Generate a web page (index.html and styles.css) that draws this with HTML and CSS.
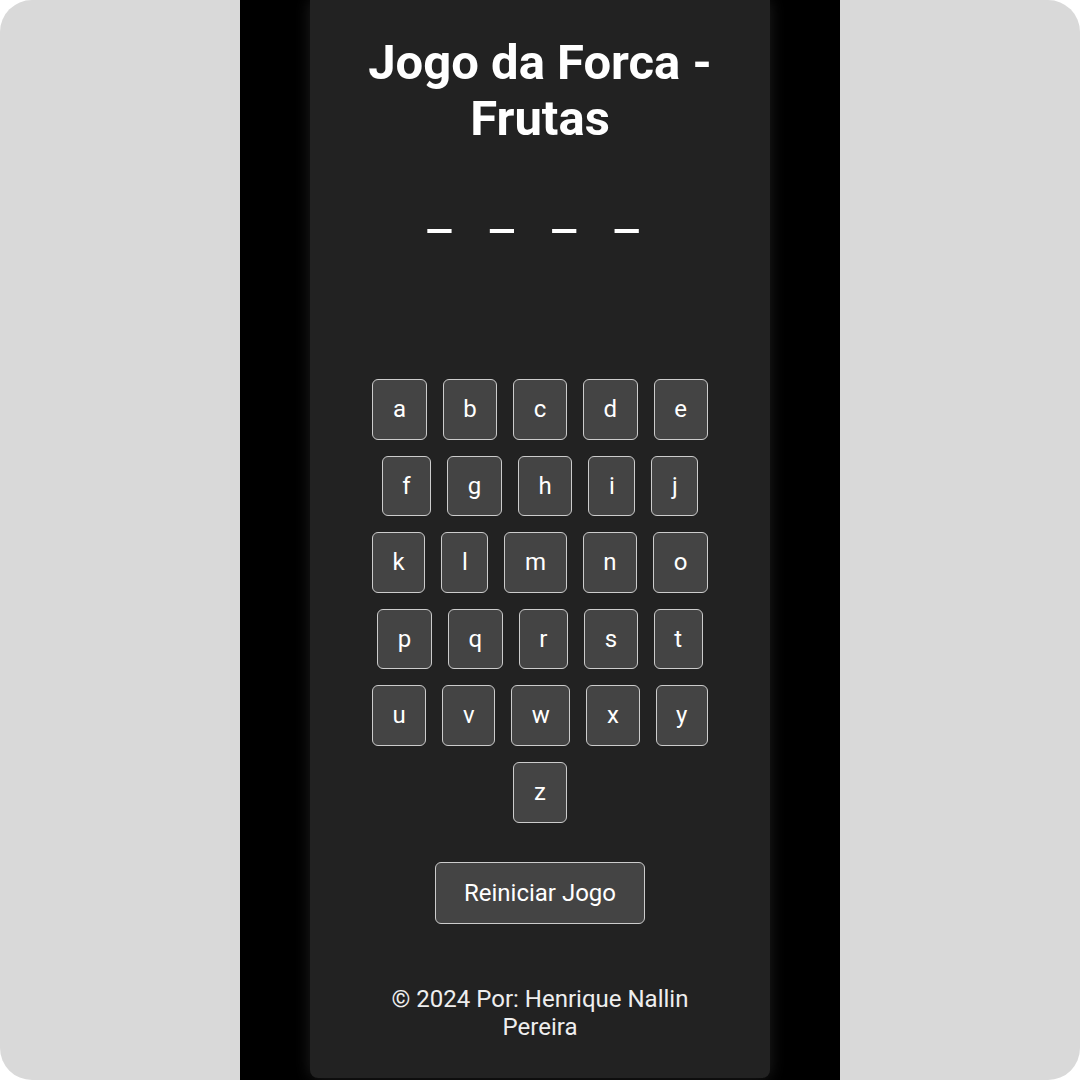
FILE: index.html
```html
<!DOCTYPE html>
<html lang="pt-BR">
<head>
    <meta charset="UTF-8">
    <meta name="viewport" content="width=device-width, initial-scale=1.0">
    <title>Jogo da Forca - Frutas</title>
    <link rel="stylesheet" href="styles.css">
</head>
<body>
    <div class="frame">
        <div class="screen">
            <div class="game">
                <h1 class="title">Jogo da Forca - Frutas</h1>
                <div class="word">
                    <span class="slot">_</span>
                    <span class="slot">_</span>
                    <span class="slot">_</span>
                    <span class="slot">_</span>
                </div>
                <div class="keyboard">
                    <button class="key">a</button>
                    <button class="key">b</button>
                    <button class="key">c</button>
                    <button class="key">d</button>
                    <button class="key">e</button>
                    <button class="key">f</button>
                    <button class="key">g</button>
                    <button class="key">h</button>
                    <button class="key">i</button>
                    <button class="key">j</button>
                    <button class="key">k</button>
                    <button class="key">l</button>
                    <button class="key">m</button>
                    <button class="key">n</button>
                    <button class="key">o</button>
                    <button class="key">p</button>
                    <button class="key">q</button>
                    <button class="key">r</button>
                    <button class="key">s</button>
                    <button class="key">t</button>
                    <button class="key">u</button>
                    <button class="key">v</button>
                    <button class="key">w</button>
                    <button class="key">x</button>
                    <button class="key">y</button>
                    <button class="key">z</button>
                </div>
                <button class="reset">Reiniciar Jogo</button>
                <p class="footer">&copy; 2024 Por: Henrique Nallin Pereira</p>
            </div>
        </div>
    </div>
<script>
  const fruits = ["pera", "kiwi", "figo", "lima", "coco", "caju"];
  const slots = document.querySelectorAll(".slot");
  const keys = document.querySelectorAll(".key");
  let secret = fruits[Math.floor(Math.random() * fruits.length)];

  keys.forEach((key) => {
    key.addEventListener("click", guess);
  });

  function guess(e) {
    const letter = e.target.textContent;
    e.target.disabled = true;
    for (let i = 0; i < secret.length; i++) {
      if (secret[i] === letter) {
        slots[i].textContent = letter; // show the letter that was found
      }
    }
  }

  document.querySelector(".reset").addEventListener("click", () => {
    secret = fruits[Math.floor(Math.random() * fruits.length)];
    slots.forEach((slot) => (slot.textContent = "_"));
    keys.forEach((key) => (key.disabled = false));
  });
</script>
</body>
</html>
```

FILE: styles.css
```css
/* Jogo da Forca */
body {
    margin: 0;
    background-color: #fff;
    font-family: Roboto, "Liberation Sans", sans-serif;
}

.frame {
    display: flex;
    justify-content: center;
    width: 1080px;
    height: 1080px;
    background-color: #d9d9d9;
    border-radius: 32px;
    overflow: hidden;
}

.screen {
    display: flex;
    justify-content: center;
    width: 600px;
    background-color: #000;
}

.game {
    width: 380px;
    height: 1078px;
    padding: 0 40px;
    background-color: #222;
    border-radius: 0 0 8px 8px;
    box-shadow: 0 0 16px rgba(255, 255, 255, 0.12);
    color: #fff;
    text-align: center;
    display: flex;
    flex-direction: column;
    align-items: center;
}

.title {
    margin: 35px 0 36px;
    font-size: 49px;
    line-height: 56px;
    font-weight: 700;
}

.word {
    display: flex;
    justify-content: center;
    gap: 38px;
    padding-right: 14px;
    font-size: 54px;
    line-height: 56px;
}

.keyboard {
    display: flex;
    flex-wrap: wrap;
    justify-content: center;
    width: 380px;
    margin-top: 132px;
}

.key {
    margin: 8px;
    padding: 15px 19.6px;
    font-family: Roboto, "Liberation Sans", sans-serif;
    font-size: 24px;
    line-height: 28.6px;
    color: #fff;
    background-color: #444;
    border: 1px solid #ccc;
    border-radius: 6px;
    cursor: pointer;
}

.key:disabled {
    opacity: 0.4;
}

.reset {
    margin-top: 31px;
    padding: 16px 28px;
    font-family: Roboto, "Liberation Sans", sans-serif;
    font-size: 24px;
    line-height: 28px;
    color: #fff;
    background-color: #444;
    border: 1px solid #ccc;
    border-radius: 6px;
    cursor: pointer;
}

.footer {
    width: 340px;
    margin: 61px 0 0;
    font-size: 24px;
    line-height: 28px;
    color: #eee;
}
```
